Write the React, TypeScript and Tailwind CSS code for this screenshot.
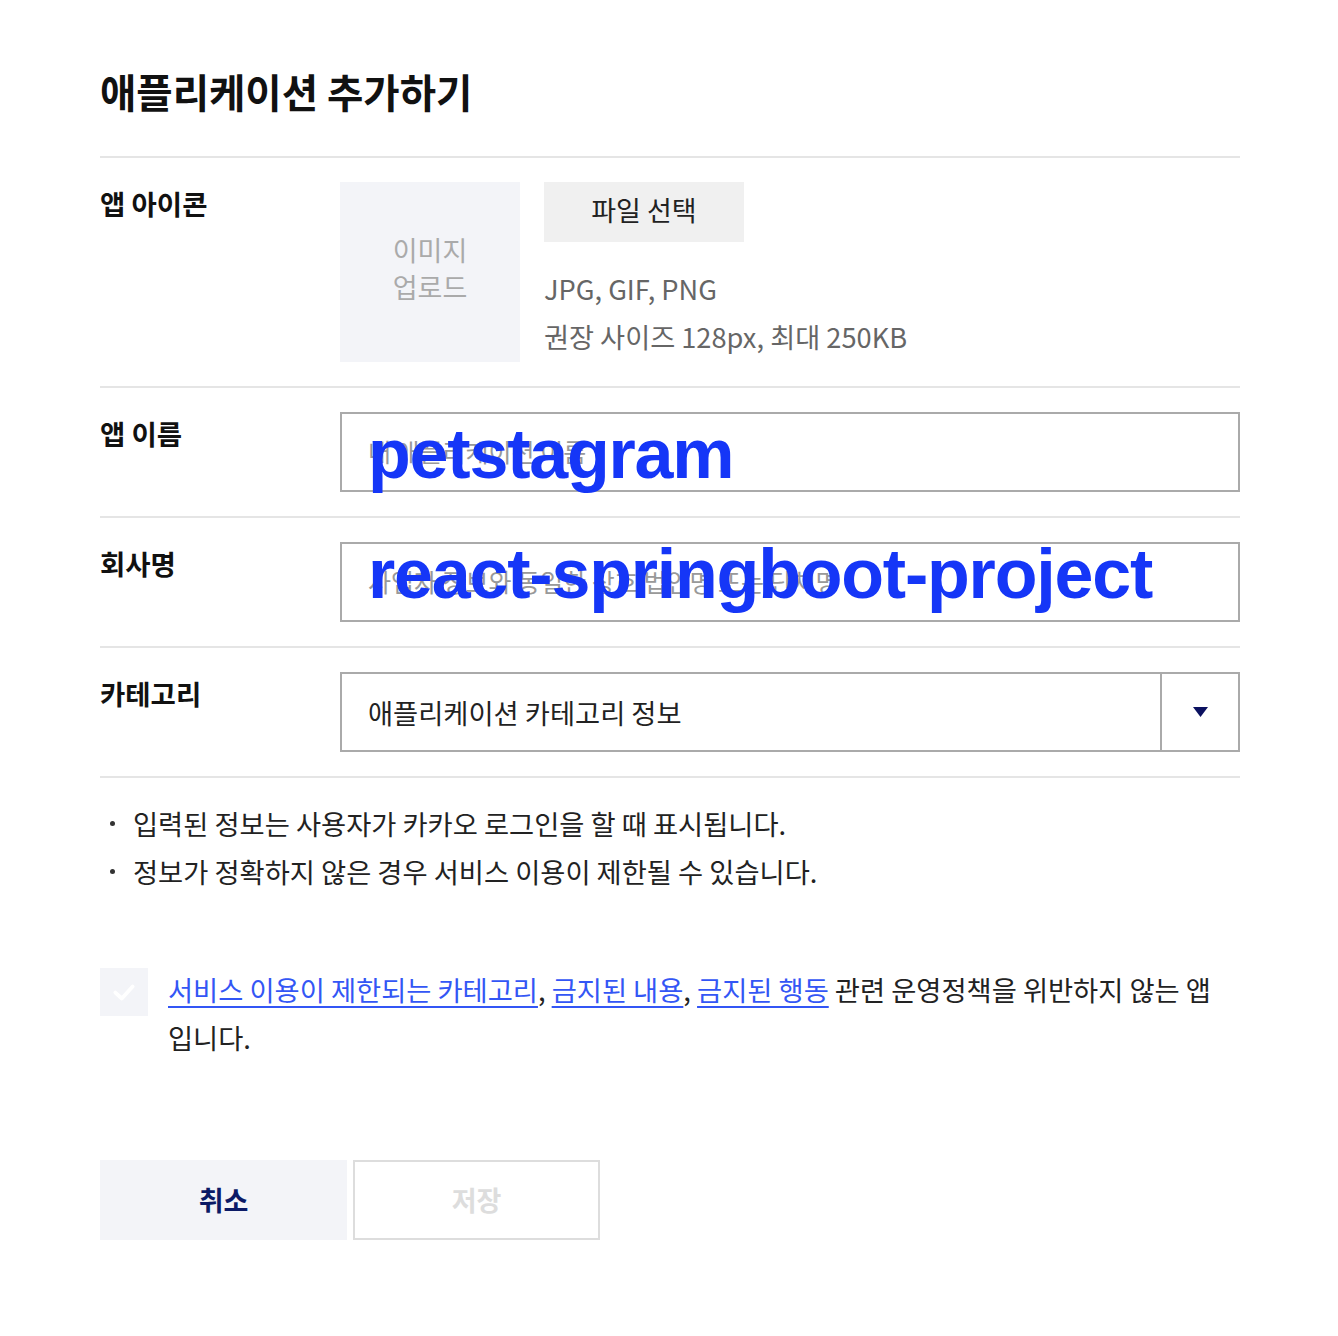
import React from 'react'

const FONT = '"Noto Sans CJK KR", "Noto Sans", sans-serif'

function Row(props: { label: string; children: React.ReactNode }) {
    return (
        <div className="flex py-[24px] border-b-2 border-[#e5e5e5]">
            <div className="w-[240px] shrink-0 text-[27.5px] leading-[42px] font-bold text-[#111]">{props.label}</div>
            <div className="flex-1">{props.children}</div>
        </div>
    )
}

function TextField(props: { placeholder: string; value: string; valueClass: string }) {
    return (
        <div className="relative h-[80px] border-2 border-[#aaaaaa] flex items-center pl-[26px]">
            <span className="text-[25px] text-[#999] whitespace-nowrap">{props.placeholder}</span>
            {/* typed value sits over the placeholder */}
            <span
                className={
                    'absolute left-[26px] text-[70px] leading-[70px] font-bold text-[#1536f7] tracking-[-1.2px] whitespace-nowrap ' +
                    props.valueClass
                }
                style={{ fontFamily: '"Liberation Sans", Arial, sans-serif' }}
            >
                {props.value}
            </span>
        </div>
    )
}

export default function App() {
    return (
        <div className="min-h-[1336px] bg-white text-[#222]" style={{ fontFamily: FONT }}>
            <div className="w-[1140px] ml-[100px] pt-[66px]">
                {/* title */}
                <h1 className="text-[39.5px] leading-[50px] font-bold text-[#111] mb-[40px]">애플리케이션 추가하기</h1>

                <div className="border-t-2 border-[#e5e5e5]">
                    {/* icon */}
                    <Row label="앱 아이콘">
                        <div className="flex gap-[24px]">
                            <div className="size-[180px] bg-[#f3f4f8] flex items-center justify-center text-center text-[27px] leading-[37px] text-[#aaaaaa] pb-[8px]">
                                이미지
                                <br />
                                업로드
                            </div>
                            <div>
                                <div className="w-[200px] h-[60px] bg-[#f0f0f0] flex items-center justify-center text-[27px] text-[#222] pb-[4px]">
                                    파일 선택
                                </div>
                                <div className="mt-[22px] text-[27.2px] leading-[48px] text-[#666]">
                                    <p>JPG, GIF, PNG</p>
                                    <p>권장 사이즈 128px, 최대 250KB</p>
                                </div>
                            </div>
                        </div>
                    </Row>

                    <Row label="앱 이름">
                        <TextField placeholder="내 애플리케이션 이름" value="petstagram" valueClass="top-[5px]" />
                    </Row>

                    <Row label="회사명">
                        <TextField
                            placeholder="사업자 정보와 동일한 상호 법인명 또는 단체명"
                            value="react-springboot-project"
                            valueClass="top-[-5px]"
                        />
                    </Row>

                    <Row label="카테고리">
                        <div className="h-[80px] border-2 border-[#aaaaaa] flex">
                            <div className="flex-1 flex items-center pl-[26px] text-[27.3px] text-[#222]">애플리케이션 카테고리 정보</div>
                            <div className="w-[78px] border-l-2 border-[#aaaaaa] flex items-center justify-center">
                                <svg width="15" height="10" viewBox="0 0 15 10">
                                    <path d="M0 0 H15 L7.5 10 Z" fill="#0b1160" />
                                </svg>
                            </div>
                        </div>
                    </Row>
                </div>

                {/* notes */}
                <ul className="pt-[21px] text-[27.3px] leading-[48px] text-[#222]">
                    <li className="flex items-center">
                        <span className="w-[33px] flex">
                            <span className="ml-[10px] size-[5px] rounded-full bg-[#333]" />
                        </span>
                        입력된 정보는 사용자가 카카오 로그인을 할 때 표시됩니다.
                    </li>
                    <li className="flex items-center">
                        <span className="w-[33px] flex">
                            <span className="ml-[10px] size-[5px] rounded-full bg-[#333]" />
                        </span>
                        정보가 정확하지 않은 경우 서비스 이용이 제한될 수 있습니다.
                    </li>
                </ul>

                {/* agreement */}
                <div className="mt-[70px] flex gap-[20px] items-start">
                    <div className="mt-[3px] size-[48px] shrink-0 bg-[#f3f4f8] flex items-center justify-center">
                        <svg width="26" height="26" viewBox="0 0 24 24" fill="none">
                            <path d="M4 12.5 L10 18 L20 7" stroke="#ffffff" strokeWidth="3.5" strokeLinecap="round" strokeLinejoin="round" />
                        </svg>
                    </div>
                    <p className="flex-1 text-[27.3px] leading-[48px] text-[#222]">
                        <a className="text-[#3356f5] underline underline-offset-[5px]">서비스 이용이 제한되는 카테고리</a>,{' '}
                        <a className="text-[#3356f5] underline underline-offset-[5px]">금지된 내용</a>,{' '}
                        <a className="text-[#3356f5] underline underline-offset-[5px]">금지된 행동</a> 관련 운영정책을 위반하지 않는 앱
                        입니다.
                    </p>
                </div>

                {/* actions */}
                <div className="mt-[99px] flex gap-[6px]">
                    <button className="w-[247px] h-[80px] bg-[#f3f4f8] text-[27px] font-bold text-[#0b1a66]">취소</button>
                    <button className="w-[247px] h-[80px] border-2 border-[#dddddd] bg-white text-[27px] font-bold text-[#dddddd]">저장</button>
                </div>
            </div>
        </div>
    )
}
